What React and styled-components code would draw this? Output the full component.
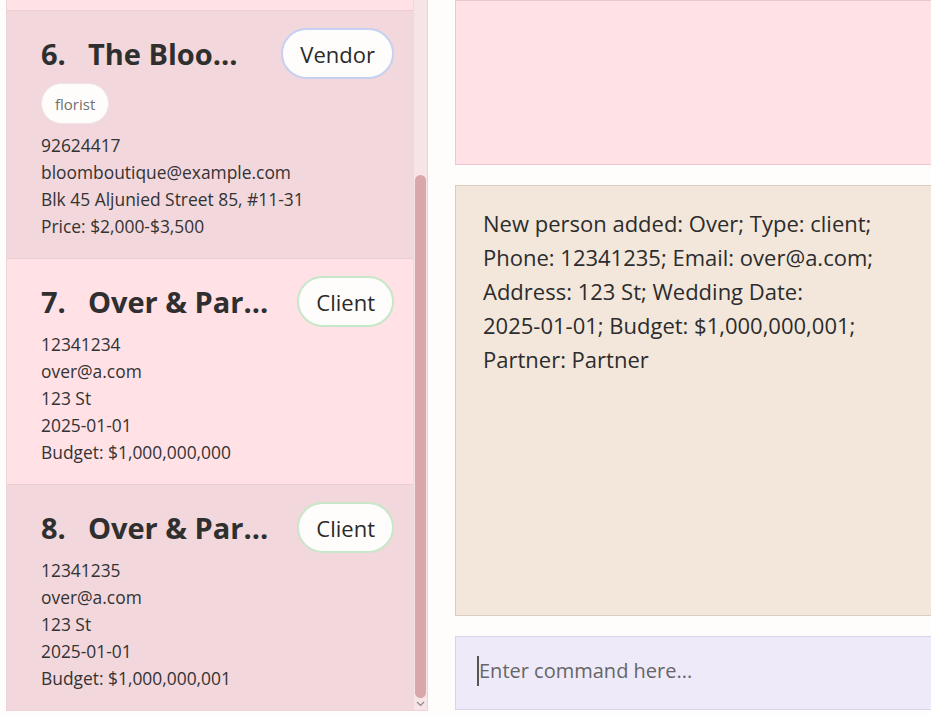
import styled, { createGlobalStyle } from 'styled-components';

const GlobalStyle = createGlobalStyle`
  html, body {
    margin: 0;
    padding: 0;
    background: #fffdfc;
    overflow: hidden;
  }
  body {
    font-family: 'Open Sans', 'Noto Sans', sans-serif;
    color: #2f2f2f;
  }
`;

const Page = styled.div`
  display: flex;
  gap: 27px;
  height: 711px;
  padding-left: 6px;
`;

const ListPanel = styled.div`
  display: flex;
  width: 420px;
  flex-shrink: 0;
  border-left: 1px solid #ecd3d7;
  border-right: 1px solid #ecd3d7;
  border-bottom: 1px solid #ecd3d7;
  background: #f7e4e7;
`;

const ListViewport = styled.div`
  flex: 1;
  display: flex;
  flex-direction: column;
  justify-content: flex-end;
  overflow: hidden;
`;

const Card = styled.div`
  flex-shrink: 0;
  padding: 17px 19px 18px 34px;
  background: ${(p) => (p.$odd ? '#f2d7dc' : '#ffe1e6')};
  border-top: 1px solid #ebcdd2;
`;

const CardHeader = styled.div`
  display: flex;
  align-items: center;
  justify-content: space-between;
  margin-bottom: 4px;
`;

const Title = styled.div`
  display: flex;
  gap: 22px;
  font-size: 29px;
  font-weight: 700;
  color: #2f2f2f;
  white-space: nowrap;
`;

const TypeBadge = styled.div`
  padding: 0 17px;
  height: 47px;
  display: flex;
  align-items: center;
  border-radius: 26px;
  background: #fffdfc;
  border: 2px solid ${(p) => (p.$kind === 'vendor' ? '#c6d0f0' : '#c8e6c8')};
  font-size: 22px;
  color: #2a2a2a;
`;

const Tags = styled.div`
  display: flex;
  gap: 6px;
  margin: 2px 0 8px;
`;

const Tag = styled.span`
  padding: 0 13px;
  height: 41px;
  display: flex;
  align-items: center;
  border-radius: 21px;
  background: #fffdfc;
  border: 1px solid #efe3e3;
  box-sizing: border-box;
  font-size: 15px;
  color: #707070;
`;

const Line = styled.div`
  font-size: 17.4px;
  line-height: 27px;
  color: #333;
`;

const Track = styled.div`
  width: 13px;
  display: flex;
  flex-direction: column;
  align-items: center;
  background: #f7e4e7;
  border-left: 1px solid #efd8dc;
`;

const TrackSpace = styled.div`
  flex: 1;
`;

const Thumb = styled.div`
  width: 11px;
  height: 523px;
  border-radius: 6px;
  background: #d9a6a9;
`;

const ArrowButton = styled.div`
  height: 12px;
  display: flex;
  align-items: center;
  justify-content: center;
`;

const RightColumn = styled.div`
  display: flex;
  flex-direction: column;
  gap: 20px;
  width: 520px;
  flex-shrink: 0;
`;

const Box = styled.div`
  box-sizing: border-box;
  height: ${(p) => p.$h}px;
  background: ${(p) => p.$bg};
  border: 1px solid ${(p) => p.$border};
`;

const ResultText = styled.div`
  padding: 20px 0 0 27px;
  font-size: 22px;
  line-height: 34px;
  color: #2c2c2c;
  max-width: 405px;
`;

const NoBreak = styled.span`
  white-space: nowrap;
`;

const CommandRow = styled.div`
  display: flex;
  align-items: center;
  height: 100%;
  box-sizing: border-box;
  padding: 0 0 5px 21px;
`;

const Caret = styled.span`
  width: 2px;
  height: 30px;
  background: #555;
`;

const Placeholder = styled.span`
  font-size: 20px;
  color: #666;
`;

const people = [
  {
    no: 5,
    name: 'Golden Hour Photo',
    kind: 'vendor',
    lines: ['91234567', 'goldenhour@example.com', 'Blk 12 Clementi Ave 3, #05-10', 'Price: $1,500-$2,800'],
    tags: ['photographer'],
  },
  {
    no: 6,
    name: 'The Bloo...',
    kind: 'vendor',
    tags: ['florist'],
    lines: ['92624417', 'bloomboutique@example.com', 'Blk 45 Aljunied Street 85, #11-31', 'Price: $2,000-$3,500'],
  },
  {
    no: 7,
    name: 'Over & Par...',
    kind: 'client',
    tags: [],
    lines: ['12341234', 'over@a.com', '123 St', '2025-01-01', 'Budget: $1,000,000,000'],
  },
  {
    no: 8,
    name: 'Over & Par...',
    kind: 'client',
    tags: [],
    lines: ['12341235', 'over@a.com', '123 St', '2025-01-01', 'Budget: $1,000,000,001'],
  },
];

const PersonCard = ({ person }) => (
  <Card $odd={person.no % 2 === 0}>
    <CardHeader>
      <Title>
        <span>{person.no}.</span>
        <span>{person.name}</span>
      </Title>
      <TypeBadge $kind={person.kind}>{person.kind === 'vendor' ? 'Vendor' : 'Client'}</TypeBadge>
    </CardHeader>
    {person.tags.length > 0 && (
      <Tags>
        {person.tags.map((t) => (
          <Tag key={t}>{t}</Tag>
        ))}
      </Tags>
    )}
    {person.lines.map((l) => (
      <Line key={l}>{l}</Line>
    ))}
  </Card>
);

export default function App() {
  return (
    <>
      <GlobalStyle />
      <Page>
        <ListPanel>
          <ListViewport>
            {people.map((p) => (
              <PersonCard key={p.no} person={p} />
            ))}
          </ListViewport>
          <Track>
            <TrackSpace />
            <Thumb />
            <ArrowButton>
              <svg width="9" height="6" viewBox="0 0 9 6">
                <path d="M1 1 L4.5 4.5 L8 1" fill="none" stroke="#8a8a8a" strokeWidth="1.2" />
              </svg>
            </ArrowButton>
          </Track>
        </ListPanel>
        <RightColumn>
          <Box $h={165} $bg="#ffe1e6" $border="#e8c9cf" />
          <Box $h={431} $bg="#f3e7dc" $border="#dccbbf">
            <ResultText>
              New person added: Over; Type: client; Phone: 12341235; Email: over@a.com; Address: 123 St; Wedding Date:{' '}
              <NoBreak>2025-01-01;</NoBreak> Budget: $1,000,000,001; Partner: Partner
            </ResultText>
          </Box>
          <Box $h={74} $bg="#efeafa" $border="#d9d3ea">
            <CommandRow>
              <Caret />
              <Placeholder>Enter command here...</Placeholder>
            </CommandRow>
          </Box>
        </RightColumn>
      </Page>
    </>
  );
}
